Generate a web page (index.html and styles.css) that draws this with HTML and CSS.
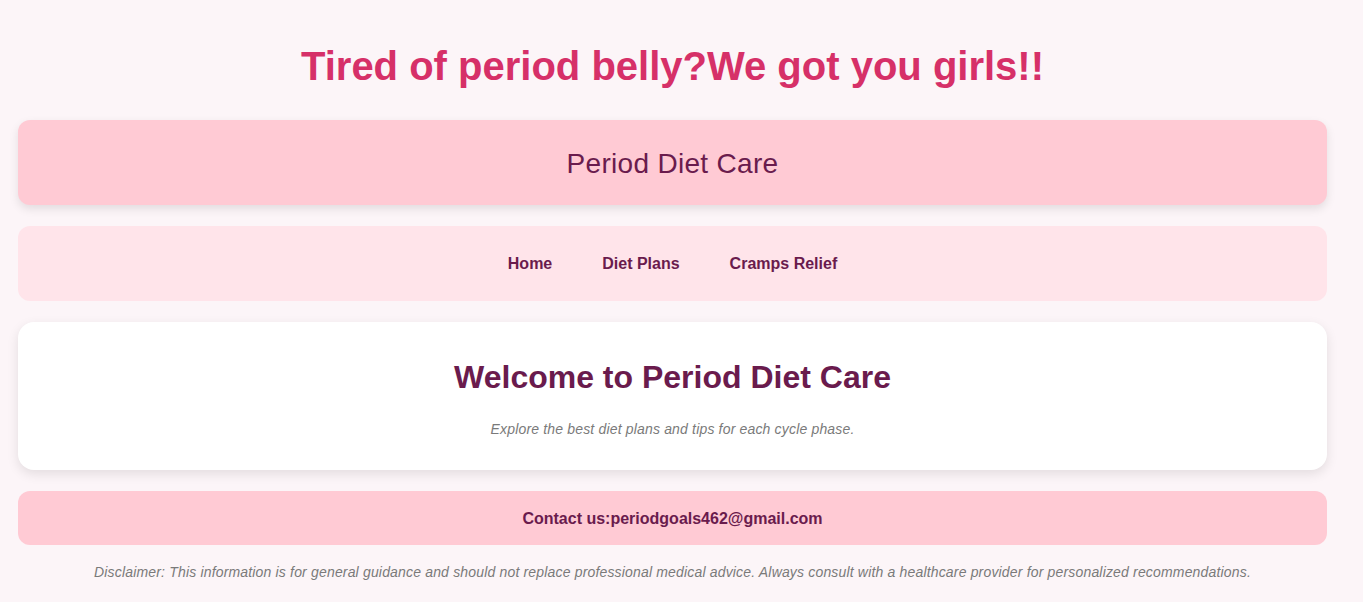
FILE: index.html
```html
<!DOCTYPE html>
<html lang="en">
<head>
<meta charset="utf-8">
<title>Period Diet Care</title>
<link rel="stylesheet" href="styles.css">
</head>
<body>
<div class="page">
  <h1 class="tagline">Tired of period belly?We got you girls!!</h1>
  <header class="site-header">Period Diet Care</header>
  <nav class="site-nav">
    <a href="#" class="nav-link">Home</a>
    <a href="#" class="nav-link">Diet Plans</a>
    <a href="#" class="nav-link">Cramps Relief</a>
  </nav>
  <section class="welcome">
    <h2 class="welcome-title">Welcome to Period Diet Care</h2>
    <p class="welcome-text">Explore the best diet plans and tips for each cycle phase.</p>
  </section>
  <footer class="contact">Contact us:periodgoals462@gmail.com</footer>
  <p class="disclaimer">Disclaimer: This information is for general guidance and should not replace professional medical advice. Always consult with a healthcare provider for personalized recommendations.</p>
</div>
</body>
</html>
```
FILE: styles.css
```css
html, body {
  margin: 0;
  padding: 0;
}
body {
  background: #fcf5f8;
  font-family: "Liberation Sans", Arial, sans-serif;
  color: #6a1b4d;
}
.page {
  padding: 43px 36px 22px 18px;
  display: flex;
  flex-direction: column;
}
.tagline {
  margin: 0 0 31px;
  font-size: 40px;
  line-height: 46px;
  font-weight: bold;
  color: #d63068;
  text-align: center;
}
.site-header {
  background: #ffcad4;
  border-radius: 12px;
  box-shadow: 0 4px 10px rgba(0, 0, 0, 0.1);
  text-align: center;
  font-size: 28px;
  line-height: 32px;
  letter-spacing: 0.3px;
  padding: 28px 0 25px;
  margin-bottom: 21px;
}
.site-nav {
  background: #ffe4ea;
  border-radius: 12px;
  display: flex;
  justify-content: center;
  gap: 50px;
  padding: 28px 0;
  margin-bottom: 21px;
}
.nav-link {
  color: #6a1b4d;
  text-decoration: none;
  font-weight: bold;
  font-size: 16px;
  line-height: 19px;
}
.welcome {
  background: #ffffff;
  border-radius: 16px;
  box-shadow: 0 4px 12px rgba(0, 0, 0, 0.1);
  text-align: center;
  padding: 20px;
  margin-bottom: 21px;
}
.welcome-title {
  margin: 17px 0 0;
  font-size: 32px;
  line-height: 37px;
  font-weight: bold;
  color: #6a1b4d;
}
.welcome-text {
  margin: 25px 0 13px;
  font-size: 14px;
  line-height: 16px;
  font-style: italic;
  letter-spacing: 0.17px;
  color: #7a7a7a;
}
.contact {
  background: #ffcad4;
  border-radius: 12px;
  text-align: center;
  font-weight: bold;
  font-size: 16px;
  line-height: 18px;
  padding: 19px 0 17px;
  margin-bottom: 19px;
}
.disclaimer {
  margin: 0 0 20px;
  text-align: center;
  font-size: 14px;
  line-height: 16px;
  font-style: italic;
  letter-spacing: 0.17px;
  color: #7a7a7a;
}
```
